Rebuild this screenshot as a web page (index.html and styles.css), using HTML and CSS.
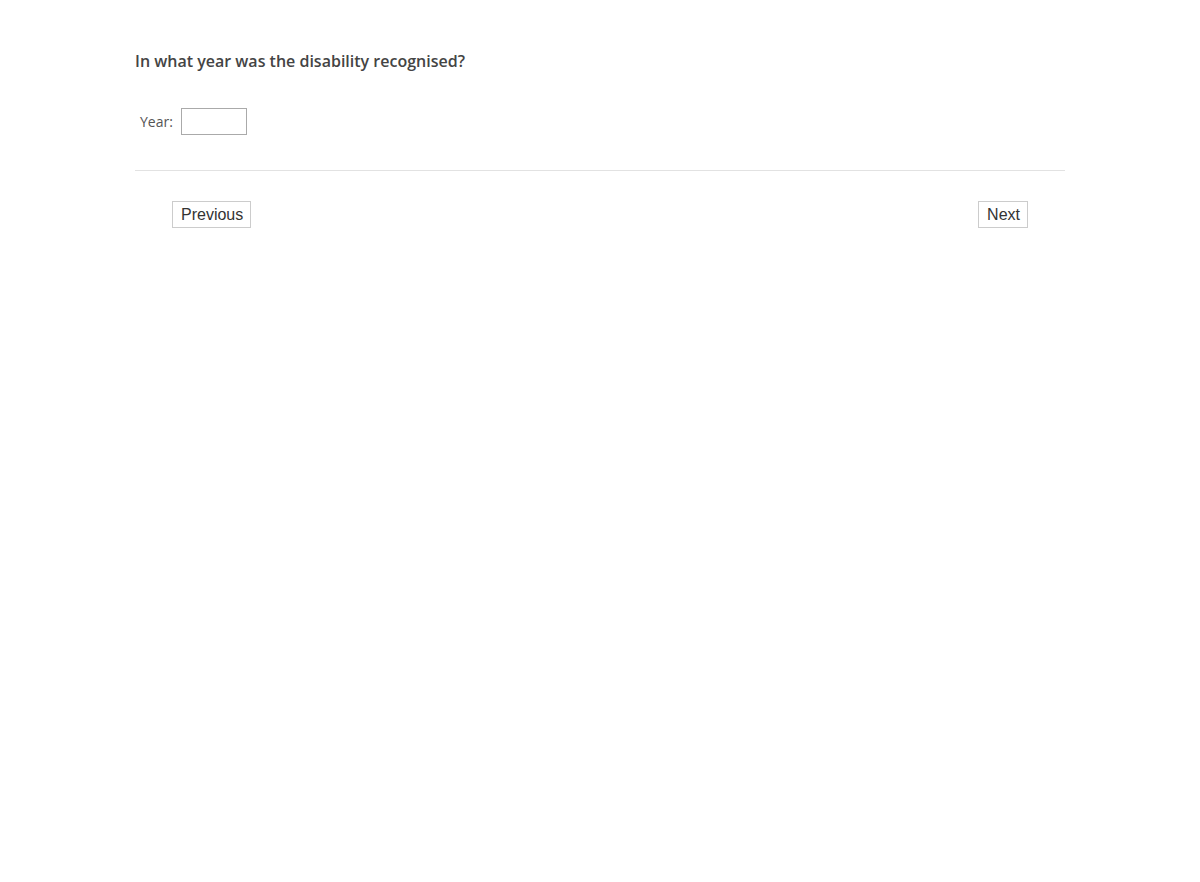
FILE: index.html
```html
<!DOCTYPE html>
<html lang="en">
<head>
    <meta charset="UTF-8">
    <meta name="viewport" content="width=device-width, initial-scale=1.0">
    <title>Survey Question</title>
    <link rel="stylesheet" href="styles.css">
</head>
<body>
    <div class="survey">
        <div class="question">
            <h2 class="question-title">In what year was the disability recognised?</h2>
            <div class="answer">
                <label for="year">Year:</label>
                <input type="text" id="year" class="year-input">
            </div>
        </div>
        <div class="nav">
            <button class="nav-button">Previous</button>
            <button class="nav-button">Next</button>
        </div>
    </div>
</body>
</html>
```

FILE: styles.css
```css
body {
    margin: 0;
    background: #fff;
    font-family: "Open Sans", sans-serif;
    color: #444;
}
.survey {
    width: 930px;
    margin: 0 auto;
    padding-top: 49px;
}
.question {
    border-bottom: 1px solid #e2e2e2;
    padding-bottom: 35px;
}
.question-title {
    margin: 0;
    font-size: 16px;
    font-weight: 600;
    line-height: 24px;
    color: #444;
}
.answer {
    display: flex;
    align-items: center;
    gap: 8px;
    margin-top: 35px;
    padding-left: 5px;
    font-size: 14px;
    color: #555;
}
.year-input {
    width: 66px;
    height: 27px;
    box-sizing: border-box;
    border: 1px solid #aaa;
    padding: 2px 4px;
    font-family: "Open Sans", sans-serif;
}
.nav {
    display: flex;
    justify-content: space-between;
    padding: 30px 37px 0;
}
.nav-button {
    height: 27px;
    padding: 0 7px 0 8px;
    background: #fff;
    border: 1px solid #ccc;
    border-radius: 0;
    font-family: "Liberation Sans", Arial, sans-serif;
    font-size: 16px;
    color: #333;
    cursor: pointer;
}
```
